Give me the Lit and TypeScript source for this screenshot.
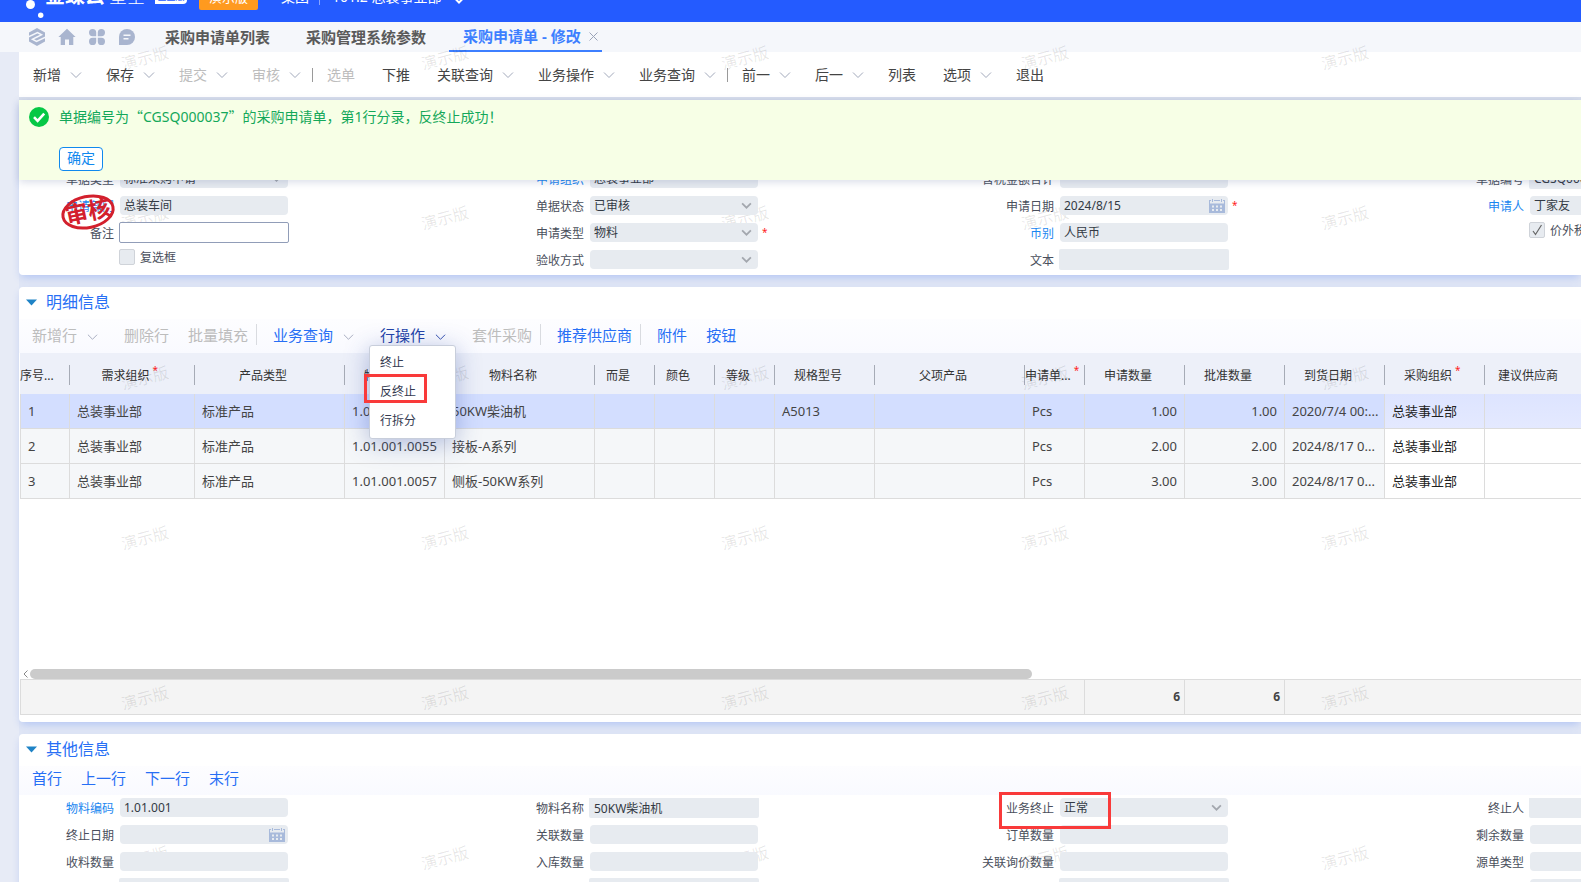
import { LitElement, html, css, svg, nothing } from "lit";
import { customElement } from "lit/decorators.js";
import { classMap } from "lit/directives/class-map.js";

type Field = {
  label: string;
  value?: string;
  kind?: "base" | "text" | "edit" | "select" | "date" | "check";
  link?: boolean;
  required?: boolean;
  checked?: boolean;
};
type Tool = { label: string; menu?: boolean; off?: boolean; sep?: boolean; open?: boolean };

const TOOLS: Tool[] = [
  { label: "新增", menu: true },
  { label: "保存", menu: true },
  { label: "提交", menu: true, off: true },
  { label: "审核", menu: true, off: true },
  { label: "选单", off: true, sep: true },
  { label: "下推" },
  { label: "关联查询", menu: true },
  { label: "业务操作", menu: true },
  { label: "业务查询", menu: true },
  { label: "前一", menu: true, sep: true },
  { label: "后一", menu: true },
  { label: "列表" },
  { label: "选项", menu: true },
  { label: "退出" },
];

const ROW_TOOLS: Tool[] = [
  { label: "新增行", menu: true, off: true },
  { label: "删除行", off: true },
  { label: "批量填充", off: true },
  { label: "业务查询", menu: true, sep: true },
  { label: "行操作", menu: true, open: true },
  { label: "套件采购", off: true },
  { label: "推荐供应商", sep: true },
  { label: "附件", sep: true },
  { label: "按钮" },
];

const HEAD_FIELDS: Field[][] = [
  [
    { label: "单据类型", value: "标准采购申请", kind: "select" },
    { label: "申请组织", value: "总装事业部", link: true },
    { label: "含税金额合计" },
    { label: "单据编号", value: "CGSQ000037", kind: "text" },
  ],
  [
    { label: "申请部门", value: "总装车间", link: true },
    { label: "单据状态", value: "已审核", kind: "select" },
    { label: "申请日期", value: "2024/8/15", kind: "date", required: true },
    { label: "申请人", value: "丁家友", link: true },
  ],
  [
    { label: "备注", kind: "edit" },
    { label: "申请类型", value: "物料", kind: "select", required: true },
    { label: "币别", value: "人民币", link: true },
    { label: "价外税", kind: "check", checked: true },
  ],
  [
    { label: "复选框", kind: "check" },
    { label: "验收方式", kind: "select" },
    { label: "文本", kind: "text" },
  ],
];

const OTHER_FIELDS: Field[][] = [
  [
    { label: "物料编码", value: "1.01.001", link: true },
    { label: "物料名称", value: "50KW柴油机", kind: "text" },
    { label: "业务终止", value: "正常", kind: "select" },
    { label: "终止人", kind: "text" },
  ],
  [
    { label: "终止日期", kind: "date" },
    { label: "关联数量" },
    { label: "订单数量" },
    { label: "剩余数量" },
  ],
  [
    { label: "收料数量" },
    { label: "入库数量" },
    { label: "关联询价数量" },
    { label: "源单类型" },
  ],
  [
    { label: "", kind: "text" },
    { label: "", kind: "text" },
    { label: "", kind: "text" },
    { label: "" },
  ],
];

const COLUMNS: { title: string; width: number; num?: boolean; required?: boolean; open?: boolean }[] = [
  { title: "序号...", width: 50 },
  { title: "需求组织", width: 125, required: true },
  { title: "产品类型", width: 150 },
  { title: "物料编码", width: 100 },
  { title: "物料名称", width: 150 },
  { title: "而是", width: 60 },
  { title: "颜色", width: 60 },
  { title: "等级", width: 60 },
  { title: "规格型号", width: 100 },
  { title: "父项产品", width: 150 },
  { title: "申请单...", width: 60, required: true },
  { title: "申请数量", width: 100, num: true },
  { title: "批准数量", width: 100, num: true },
  { title: "到货日期", width: 100 },
  { title: "采购组织", width: 100, required: true, open: true },
  { title: "建议供应商", width: 100, open: true },
];

const ROWS: string[][] = [
  ["1", "总装事业部", "标准产品", "1.01.001", "50KW柴油机", "", "", "", "A5013", "", "Pcs", "1.00", "1.00", "2020/7/4 00:...", "总装事业部", ""],
  ["2", "总装事业部", "标准产品", "1.01.001.0055", "接板-A系列", "", "", "", "", "", "Pcs", "2.00", "2.00", "2024/8/17 0...", "总装事业部", ""],
  ["3", "总装事业部", "标准产品", "1.01.001.0057", "侧板-50KW系列", "", "", "", "", "", "Pcs", "3.00", "3.00", "2024/8/17 0...", "总装事业部", ""],
];

const chevron = (cls = "chev") => html`<svg class=${cls} viewBox="0 0 12 8" aria-hidden="true">
  <path d="M1 1.5 L6 6.5 L11 1.5" fill="none" stroke="currentColor" />
</svg>`;

@customElement("app-root")
export class AppRoot extends LitElement {
  static styles = css`
    :host {
      display: block;
      position: relative;
      height: 100vh;
      overflow: hidden;
      background: #e0e6f5;
      color: #333;
      font-family: "Noto Sans", "Noto Sans CJK SC", sans-serif;
      font-size: 12px;
      line-height: 16px;
    }
    * {
      box-sizing: border-box;
    }
    button,
    input,
    select {
      margin: 0;
      padding: 0;
      border: 0;
      background: none;
      color: inherit;
      font: inherit;
      appearance: none;
      outline: none;
    }
    a {
      color: inherit;
      text-decoration: none;
    }

    .brandbar {
      display: flex;
      align-items: flex-end;
      height: 22px;
      overflow: hidden;
      background: #245bff;
      color: #fff;
    }
    .brandrow {
      display: flex;
      flex: none;
      align-items: center;
      height: 50px;
      padding-left: 19px;
      font-size: 14px;
      line-height: 20px;
      white-space: nowrap;
    }
    .logo {
      width: 26px;
      height: 50px;
      flex: none;
    }
    .brand,
    .series {
      padding-bottom: 2px;
      font-size: 20px;
      font-weight: 700;
    }
    .series {
      margin-left: 4px;
      font-size: 18px;
      font-weight: 300;
    }
    .edition {
      margin-left: 10px;
      width: 32px;
      height: 14px;
      border-radius: 4px 0;
      background: #fff;
      color: #245bff;
      font-size: 9px;
      line-height: 14px;
      text-align: center;
    }
    .demo {
      margin: 0 23px 0 12px;
      width: 59px;
      height: 25px;
      border-radius: 2px;
      background: #ff9a1f;
      font-size: 13px;
      line-height: 24px;
      text-align: center;
    }
    .bar {
      width: 1px;
      height: 16px;
      margin: 0 12px 0 10px;
      background: #86a4ff;
    }
    .brandrow .chev {
      margin: 6px 0 0 12px;
      color: #fff;
      stroke-width: 2;
    }

    .tabs {
      display: flex;
      align-items: center;
      height: 30px;
      padding-left: 28px;
      background: #f5f7fb;
      font-size: 15px;
      line-height: 30px;
      font-weight: 700;
      color: #5a5a5a;
      white-space: nowrap;
    }
    .quick {
      display: flex;
      gap: 12px;
      margin-right: 11px;
    }
    .quick button {
      display: flex;
    }
    .quick svg {
      width: 18px;
      height: 18px;
      fill: #a9b5cf;
    }
    .tab {
      height: 30px;
      padding: 0 18px;
    }
    .tab.on {
      display: flex;
      align-items: center;
      gap: 8px;
      margin-left: 5px;
      padding: 0 4px 0 14px;
      border-bottom: 2px solid #3d7fff;
      color: #3d7fff;
    }
    .tab.on svg {
      width: 9px;
      height: 9px;
      stroke: #9aa3b8;
    }

    .chev {
      width: 12px;
      height: 8px;
      flex: none;
      color: #a2a9bb;
    }

    .shell {
      padding-left: 19px;
      background: #e7ebf6;
    }
    .toolbar {
      display: flex;
      align-items: center;
      height: 48px;
      padding-left: 14px;
      border-bottom: 3px solid #d9dfec;
      background: #fff;
      font-size: 14px;
      color: #444;
      white-space: nowrap;
    }
    .tool {
      display: flex;
      flex: none;
      align-items: center;
      gap: 9px;
      margin-right: 27px;
      line-height: 20px;
    }
    .tool.menu {
      margin-right: 24px;
    }
    .tool.off {
      color: #bdbdbd;
    }
    .toolbar .sep {
      width: 1px;
      height: 14px;
      margin: 0 14px 0 -13px;
      background: #9a9a9a;
    }

    .stack {
      position: relative;
      background: #e0e6f5;
    }
    .card {
      position: relative;
      margin-bottom: 12px;
      border-radius: 4px 0 0 4px;
      background: #fff;
      box-shadow: 0 4px 8px -2px rgba(75, 120, 240, 0.32);
    }
    .form {
      padding: 69px 0 6px;
      border-radius: 0 0 0 4px;
    }
    .notice {
      position: absolute;
      z-index: 6;
      top: 0;
      left: 0;
      right: 0;
      display: flex;
      gap: 10px;
      height: 80px;
      padding: 6px 10px;
      background: #f7ffe6;
      box-shadow: 0 2px 8px rgba(60, 80, 140, 0.2);
      color: #14a85a;
      font-size: 14px;
      line-height: 20px;
    }
    .notice svg {
      width: 20px;
      height: 20px;
      flex: none;
      margin-top: 1px;
    }
    .notice p {
      margin: 0 0 20px;
    }
    .quote {
      font-family: "Noto Sans CJK SC", sans-serif;
    }
    .confirm {
      width: 44px;
      height: 24px;
      padding-bottom: 2px;
      border: 1px solid #1089ee;
      border-radius: 4px;
      background: #fff;
      color: #1089ee;
      line-height: 20px;
    }

    .fields {
      display: grid;
      grid-template-columns: repeat(4, 470px);
      grid-auto-rows: 19px;
      row-gap: 8px;
      overflow: hidden;
      padding-bottom: 1px;
      margin-bottom: -1px;
    }
    .field {
      display: grid;
      grid-template-columns: 95px 168px auto;
      column-gap: 6px;
      align-items: center;
    }
    .field label {
      padding-top: 2px;
      text-align: right;
      color: #4a4f5c;
      white-space: nowrap;
    }
    .field label.link {
      color: #1a86f0;
    }
    .box {
      position: relative;
      z-index: 3;
      display: flex;
      height: 19px;
    }
    .box input,
    .box select {
      width: 100%;
      height: 19px;
      padding: 0 4px;
      border-radius: 4px;
      background: #e7ebf0;
      color: #333a44;
      line-height: 19px;
    }
    .box.text,
    .box.edit {
      height: 21px;
      margin: -1px;
    }
    .box.text input,
    .box.edit input {
      height: 21px;
      padding: 0 5px;
      border-radius: 2px;
    }
    .box.edit input {
      border: 1px solid #919db8;
      background: #fff;
    }
    .box svg {
      position: absolute;
      pointer-events: none;
    }
    .box .drop {
      top: 6px;
      right: 6px;
      width: 11px;
      height: 7px;
      color: #a3a7ae;
      stroke-width: 2;
    }
    .box .cal {
      top: 3px;
      right: 3px;
      width: 16px;
      height: 14px;
    }
    .star {
      color: #f22;
      font-size: 10px;
      line-height: 18px;
    }
    .field .star {
      align-self: start;
      margin-left: -2px;
    }
    .tick {
      position: relative;
      z-index: 3;
      display: flex;
      grid-column: 2;
      align-items: center;
      gap: 5px;
      height: 16px;
      margin: -5px 0 0 -1px;
    }
    .tick input {
      width: 16px;
      height: 16px;
      border: 1px solid #cfd3d9;
      border-radius: 2px;
      background: #e7ebf0;
    }
    .tick svg {
      position: absolute;
      left: 3px;
      top: 2px;
      width: 11px;
      height: 12px;
    }
    .stamp {
      position: absolute;
      z-index: 4;
      left: 41px;
      top: 92px;
      width: 56px;
      height: 40px;
    }
    .stamp text {
      font-family: "Noto Sans CJK SC", sans-serif;
      font-size: 23px;
      font-weight: 700;
    }

    .title {
      display: flex;
      align-items: center;
      gap: 9px;
      height: 32px;
      margin: 0;
      padding: 0 0 2px 7px;
      color: #276ff5;
      font-size: 16px;
      font-weight: 400;
      line-height: 30px;
    }
    .title svg {
      width: 11px;
      height: 7px;
    }
    .rowbar {
      display: flex;
      align-items: center;
      height: 34px;
      padding: 0 0 3px 13px;
      background: linear-gradient(#fdfdff, #f9faff);
      color: #276ff5;
      font-size: 15px;
      white-space: nowrap;
    }
    .rowbar .tool {
      gap: 10px;
      margin-right: 19px;
    }
    .rowbar .tool.menu {
      margin-right: 26px;
    }
    .rowbar .chev {
      width: 11px;
      height: 8px;
      margin-top: 4px;
    }
    .rowbar .sep {
      width: 1px;
      height: 21px;
      margin: 0 16px 0 -11px;
      background: #d9dbe0;
    }
    .rowbar .open,
    .rowbar .open .chev {
      color: #2443a8;
    }
    .holder {
      position: relative;
      display: flex;
    }
    .drop-menu {
      position: absolute;
      z-index: 7;
      top: 20px;
      left: -11px;
      display: flex;
      flex-direction: column;
      width: 87px;
      margin: 0;
      padding: 3px 0 2px;
      list-style: none;
      border: 1px solid #c8cedb;
      border-radius: 3px;
      background: #fff;
      box-shadow: 0 4px 24px rgba(40, 70, 160, 0.35);
      color: #333a50;
      font-size: 12px;
    }
    .drop-menu button {
      width: 100%;
      height: 29px;
      padding-left: 10px;
      text-align: left;
    }
    .drop-menu li {
      display: flex;
    }
    .mark {
      position: absolute;
      z-index: 8;
      border: 3px solid #f93a3a;
      pointer-events: none;
    }
    .mark.item {
      top: 28px;
      left: -6px;
      width: 63px;
      height: 29px;
    }
    .mark.state {
      top: 58px;
      left: 980px;
      width: 112px;
      height: 37px;
    }

    .grid {
      min-height: 316px;
      padding-left: 1px;
      overflow: hidden;
    }
    table {
      width: 100%;
      table-layout: fixed;
      border-collapse: separate;
      border-spacing: 0;
    }
    .list {
      min-width: 1565px;
    }
    th {
      height: 41px;
      padding: 3px 0 0;
      background: #edf0f9;
      font-weight: 400;
    }
    .cap {
      position: relative;
      display: flex;
      justify-content: center;
      height: 20px;
      padding-right: 13px;
      border-right: 1px solid #a6abb6;
      line-height: 22px;
      white-space: nowrap;
    }
    th:first-child .cap,
    .cap.tight {
      justify-content: flex-start;
    }
    th .star {
      width: 0;
      text-indent: 3px;
      line-height: 10px;
    }
    td {
      height: 35px;
      padding: 0 0 0 7px;
      border: solid #dcdcdc;
      border-width: 0 1px 1px 0;
      background: #f5f7f9;
      font-size: 13px;
      color: #444;
      white-space: nowrap;
      overflow: hidden;
    }
    td:first-child {
      border-left-width: 1px;
    }
    td.num {
      padding-right: 7px;
      text-align: right;
    }
    td.editable {
      background: #fff;
      color: #222;
    }
    .picked td {
      background: #d3deff;
    }
    .picked td.editable {
      background: linear-gradient(#dde4ff, #e4e9ff);
    }
    .scroll {
      display: flex;
      align-items: center;
      gap: 2px;
      height: 10px;
      padding-left: 4px;
    }
    .scroll svg {
      width: 5px;
      height: 8px;
    }
    .thumb {
      width: 1002px;
      height: 10px;
      border-radius: 5px;
      background: #cbcbcb;
    }
    .sum {
      padding: 0 0 7px 1px;
    }
    .sum td {
      height: 36px;
      border-top-width: 1px;
      background: #f4f4f4;
      padding-right: 4px;
      text-align: right;
      font-weight: 700;
      font-size: 12px;
    }
    .sum td:last-child {
      border-right-width: 0;
    }
    .nav {
      display: flex;
      gap: 19px;
      height: 29px;
      padding: 0 13px 5px;
      margin-bottom: 3px;
      background: linear-gradient(#fdfdff, #f9faff);
      color: #276ff5;
      font-size: 15px;
      line-height: 24px;
    }
    .other {
      overflow: hidden;
      height: 160px;
      margin-bottom: 0;
    }

    .tiles {
      position: absolute;
      z-index: 2;
      top: -22px;
      left: -5px;
      display: grid;
      grid-template-columns: repeat(5, 300px);
      grid-auto-rows: 160px;
      place-items: center;
      pointer-events: none;
    }
    .tiles span {
      transform: rotate(-15deg);
      color: rgba(0, 0, 0, 0.1);
      font-size: 16px;
    }
  `;

  private tool(t: Tool) {
    const button = html`<button class=${classMap({ tool: true, menu: !!t.menu, off: !!t.off, open: !!t.open })}>
      ${t.label}${t.menu ? chevron() : nothing}
    </button>`;
    return html`${t.sep ? html`<span class="sep"></span>` : nothing}${t.open
      ? html`<div class="holder">
          ${button}
          <ul class="drop-menu">
            <li><button>终止</button></li>
            <li><button>反终止</button></li>
            <li><button>行拆分</button></li>
            <div class="mark item"></div>
          </ul>
        </div>`
      : button}`;
  }

  private field(f: Field, id: string) {
    if (f.kind === "check") {
      return html`<div class="field">
        <div class="tick">
          <input type="checkbox" id=${id} .checked=${!!f.checked} />
          <label for=${id}>${f.label}</label>
          ${f.checked
            ? html`<svg viewBox="0 0 11 12"><path d="M1 7 L3.5 10.5 L9.5 1" fill="none" stroke="#666" stroke-width="1.2" /></svg>`
            : nothing}
        </div>
      </div>`;
    }
    const kind = f.kind ?? "base";
    return html`<div class="field">
      <label class=${classMap({ link: !!f.link })} for=${id}>${f.label}</label>
      <div class="box ${kind}">
        ${kind === "select"
          ? html`<select id=${id}><option>${f.value ?? ""}</option></select>${chevron("drop")}`
          : html`<input id=${id} type="text" .value=${f.value ?? ""} ?readonly=${kind !== "edit"} />`}
        ${kind === "date" ? this.calendar() : nothing}
      </div>
      ${f.required ? html`<span class="star">*</span>` : nothing}
    </div>`;
  }

  private calendar() {
    const dots = [0, 1, 2].flatMap((c) =>
      [0, 1].map((r) => svg`<rect x=${3 + c * 4} y=${6.5 + r * 3.5} width="2" height="2" fill="#e7ebf0" />`)
    );
    return html`<svg class="cal" viewBox="0 0 16 14">
      <path d="M0 1.5H2M5 1.5H11M14 1.5H16M.5 1.5V5M15.5 1.5V5M3.5 0V3M12.5 0V3" stroke="#a8badb" fill="none" />
      <rect y="4.5" width="16" height="9.5" fill="#a8badb" />
      ${dots}
    </svg>`;
  }

  private fields(rows: Field[][], key: string) {
    return html`<div class="fields">
      ${rows.map((row, r) => row.map((f, c) => this.field(f, `${key}-${r}-${c}`)))}
    </div>`;
  }

  private title(text: string) {
    return html`<h2 class="title">
      <svg viewBox="0 0 11 7"><path d="M0 .5H11L5.5 6.5Z" fill="#1f83c6" /></svg>${text}
    </h2>`;
  }

  render() {
    return html`
      <header class="brandbar">
        <div class="brandrow">
          <svg class="logo" viewBox="0 0 26 50" fill="#fff">
            <circle cx="11.5" cy="32.5" r="4.5" />
            <circle cx="21.7" cy="43.3" r="2.7" />
          </svg>
          <span class="brand">金蝶云</span><span class="series">星空</span>
          <span class="edition">企业版</span><span class="demo">演示版</span>
          <span>集团</span><span class="bar"></span><span>101.2 总装事业部</span>${chevron()}
        </div>
      </header>

      <nav class="tabs">
        <div class="quick">
          <button aria-label="切换">
            <svg viewBox="0 0 18 18">
              <path d="M9 0 L17 4.5 V13.5 L9 18 L1 13.5 V4.5Z" />
              <path
                d="M0 9 L9.5 4.6 L13.5 6.8 L9 9 M18 9 L8.5 13.4 L4.5 11.2 L9 9"
                fill="none"
                stroke="#f5f7fb"
                stroke-width="1.5"
              />
            </svg>
          </button>
          <button aria-label="首页">
            <svg viewBox="0 0 18 18"><path d="M9 .8 L17.6 9 H15.3 V17 H11 V11.5 H7 V17 H2.7 V9 H.4Z" /></svg>
          </button>
          <button aria-label="应用">
            <svg viewBox="0 0 18 18">
              <path d="M4.6 1 a3.6 3.6 0 0 1 3.6 3.6 V8.2 H4.6 a3.6 3.6 0 0 1 0-7.2Z M13.4 1 a3.6 3.6 0 0 1 0 7.2 H9.8 V4.6 A3.6 3.6 0 0 1 13.4 1Z" />
              <path d="M4.6 9.8 H8.2 V13.4 a3.6 3.6 0 1 1 -3.6-3.6Z M9.8 9.8 H13.4 a3.6 3.6 0 1 1 -3.6 3.6Z" />
            </svg>
          </button>
          <button aria-label="消息">
            <svg viewBox="0 0 18 18">
              <path d="M9 1 a8 8 0 1 1 0 16 H1 V9 a8 8 0 0 1 8-8Z" />
              <path d="M5.5 7.3 H12.5 M5.5 10.8 H10.5" stroke="#f5f7fb" stroke-width="1.6" />
            </svg>
          </button>
        </div>
        <a class="tab" href="#list">采购申请单列表</a>
        <a class="tab" href="#params">采购管理系统参数</a>
        <a class="tab on" href="#edit">采购申请单 - 修改<svg viewBox="0 0 9 9"><path d="M.5 .5 L8.5 8.5 M8.5 .5 L.5 8.5" /></svg></a>
      </nav>

      <div class="shell">
        <div class="toolbar">${TOOLS.map((t) => this.tool(t))}</div>

        <div class="stack">
          <section class="card form">
            <div class="notice" role="status">
              <svg viewBox="0 0 20 20">
                <circle cx="10" cy="10" r="10" fill="#06c846" />
                <path d="M5 10.2 L8.6 13.8 L15.2 6.6" fill="none" stroke="#fff" stroke-width="2.6" />
              </svg>
              <div>
                <p>单据编号为<span class="quote">“</span>CGSQ000037<span class="quote">”</span>的采购申请单，第1行分录，反终止成功！</p>
                <button class="confirm">确定</button>
              </div>
            </div>
            ${this.fields(HEAD_FIELDS, "head")}
            <svg class="stamp" viewBox="0 0 56 40">
              <g transform="rotate(-12 28 20)" fill="#d3202d">
                <ellipse cx="28" cy="20" rx="25.5" ry="15.5" fill="none" stroke="#d3202d" stroke-width="3" />
                <text x="28" y="28" text-anchor="middle">审核</text>
              </g>
            </svg>
          </section>

          <section class="card">
            ${this.title("明细信息")}
            <div class="rowbar">${ROW_TOOLS.map((t) => this.tool(t))}</div>
            <div class="grid">
              <table class="list">
                <colgroup>${COLUMNS.map((c) => html`<col style="width:${c.width}px" />`)}</colgroup>
                <thead>
                  <tr>
                    ${COLUMNS.map(
                      (c) => html`<th>
                        <div class=${classMap({ cap: true, tight: c.width === 60 && !!c.required })}>
                          ${c.title}${c.required ? html`<span class="star">*</span>` : nothing}
                        </div>
                      </th>`
                    )}
                  </tr>
                </thead>
                <tbody>
                  ${ROWS.map(
                    (row, r) => html`<tr class=${classMap({ picked: r === 0 })}>
                      ${row.map(
                        (cell, c) =>
                          html`<td class=${classMap({ num: !!COLUMNS[c].num, editable: !!COLUMNS[c].open })}>${cell}</td>`
                      )}
                    </tr>`
                  )}
                </tbody>
              </table>
            </div>
            <div class="scroll">
              <svg viewBox="0 0 5 8"><path d="M4.5 .5 L1 4 L4.5 7.5" fill="none" stroke="#888" /></svg>
              <div class="thumb"></div>
            </div>
            <div class="sum">
              <table>
                <colgroup>
                  <col style="width:1065px" /><col style="width:100px" /><col style="width:100px" /><col />
                </colgroup>
                <tbody>
                  <tr><td></td><td>6</td><td>6</td><td></td></tr>
                </tbody>
              </table>
            </div>
          </section>

          <section class="card other">
            ${this.title("其他信息")}
            <div class="nav">
              <button>首行</button><button>上一行</button><button>下一行</button><button>末行</button>
            </div>
            ${this.fields(OTHER_FIELDS, "other")}
            <div class="mark state"></div>
          </section>
        </div>
      </div>

      <div class="tiles" aria-hidden="true">${Array.from({ length: 30 }, () => html`<span>演示版</span>`)}</div>
    `;
  }
}
